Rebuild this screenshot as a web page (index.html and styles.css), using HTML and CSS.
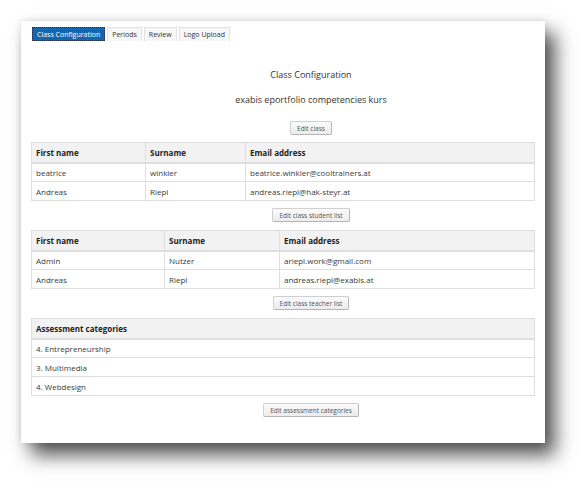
FILE: index.html
```html
<!DOCTYPE html>
<html lang="en">

<head>
    <meta charset="UTF-8">
    <title>Class Configuration</title>
    <link rel="stylesheet" href="styles.css">
</head>

<body>
    <div class="panel">
        <div class="tabs">
            <span class="tab active">Class Configuration</span>
            <span class="tab">Periods</span>
            <span class="tab">Review</span>
            <span class="tab">Logo Upload</span>
        </div>

        <div class="center heading">Class Configuration</div>
        <div class="center subheading">exabis eportfolio competencies kurs</div>

        <div class="btn-row first"><button>Edit class</button></div>

        <table class="grid students">
            <thead>
                <tr><th class="c1">First name</th><th class="c2">Surname</th><th>Email address</th></tr>
            </thead>
            <tbody>
                <tr><td>beatrice</td><td>winkler</td><td>beatrice.winkler@cooltrainers.at</td></tr>
                <tr><td>Andreas</td><td>Riepl</td><td>andreas.riepl@hak-steyr.at</td></tr>
            </tbody>
        </table>

        <div class="btn-row"><button>Edit class student list</button></div>

        <table class="grid teachers">
            <thead>
                <tr><th class="c1">First name</th><th class="c2">Surname</th><th>Email address</th></tr>
            </thead>
            <tbody>
                <tr><td>Admin</td><td>Nutzer</td><td>ariepl.work@gmail.com</td></tr>
                <tr><td>Andreas</td><td>Riepl</td><td>andreas.riepl@exabis.at</td></tr>
            </tbody>
        </table>

        <div class="btn-row"><button>Edit class teacher list</button></div>

        <table class="grid">
            <thead>
                <tr><th>Assessment categories</th></tr>
            </thead>
            <tbody>
                <tr><td>4. Entrepreneurship</td></tr>
                <tr><td>3. Multimedia</td></tr>
                <tr><td>4. Webdesign</td></tr>
            </tbody>
        </table>

        <div class="btn-row"><button>Edit assessment categories</button></div>
    </div>
</body>

</html>
```

FILE: styles.css
```css
body {
    margin: 0;
    min-height: 485px;
    padding-top: 21px;
    box-sizing: border-box;
    background: #ffffff;
    font-family: "Open Sans", Arial, sans-serif;
    color: #444;
}

.panel {
    margin-left: 21px;
    width: 524px;
    height: 422px;
    box-sizing: border-box;
    padding: 6px 10px 0 10px;
    background: #ffffff;
    display: flex;
    flex-direction: column;
    box-shadow: 0 0 8px rgba(0, 0, 0, 0.12), 10px 12px 18px rgba(0, 0, 0, 0.68);
}

.tabs {
    display: flex;
    gap: 2px;
    padding-left: 1px;
}

.tab {
    height: 14px;
    line-height: 14px;
    padding: 0 4px;
    font-size: 7px;
    color: #333;
    background: #f7f7f7;
    border: 1px solid #e2e2e2;
    border-bottom: none;
    box-sizing: border-box;
}

.tab.active {
    background: #1366b0;
    color: #ffffff;
    border-color: #1366b0;
    outline: 1px dotted #1b2f52;
    outline-offset: -1px;
}

.center {
    text-align: center;
    padding-left: 56px;
}

.heading {
    margin-top: 28px;
    font-size: 9px;
    line-height: 12px;
    color: #333;
}

.subheading {
    margin-top: 13px;
    font-size: 9px;
    line-height: 12px;
    color: #333;
}

.btn-row {
    display: flex;
    justify-content: center;
    padding-left: 56px;
    margin: 7px 0 8px;
    flex-shrink: 0;
}

.btn-row.first {
    margin-top: 15px;
    margin-bottom: 7px;
}

button {
    height: 14px;
    padding: 0 6px;
    font-family: "Open Sans", Arial, sans-serif;
    font-size: 6.5px;
    color: #555;
    background: linear-gradient(#fbfbfb, #ececec);
    border: 1px solid #cfcfcf;
    border-right-color: #b5b5b5;
    border-bottom-color: #b5b5b5;
    border-radius: 2px;
    cursor: pointer;
}

.grid {
    width: 100%;
    flex-shrink: 0;
    border-collapse: collapse;
    font-size: 8px;
    border: 1px solid #dedede;
}

.grid th {
    background: #f2f2f2;
    color: #222;
    font-weight: bold;
    text-align: left;
    height: 20px;
    padding: 0 4px;
    border: 1px solid #dedede;
    border-bottom: 2px solid #dedede;
    box-sizing: border-box;
}

.grid td {
    height: 19px;
    padding: 0 4px;
    border: 1px solid #dedede;
    color: #3a3a3a;
    box-sizing: border-box;
}

.students .c1 { width: 114px; }
.students .c2 { width: 100px; }
.teachers .c1 { width: 133px; }
.teachers .c2 { width: 115px; }
```
